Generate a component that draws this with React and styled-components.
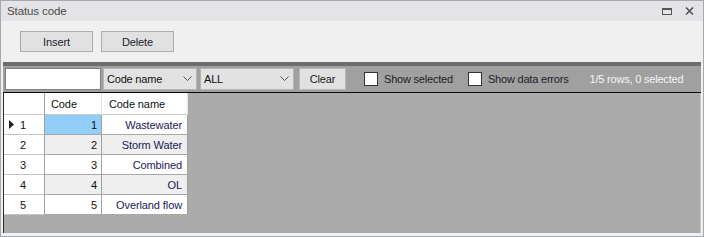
import React from "react";
import styled, { createGlobalStyle } from "styled-components";

const Global = createGlobalStyle`
  html, body { margin: 0; padding: 0; background: #ffffff; }
  * { box-sizing: border-box; }
  body { font-family: "Liberation Sans", Arial, sans-serif; font-size: 11px; letter-spacing: -0.1px; }
`;

const Window = styled.div`
  width: 704px;
  height: 237px;
  border: 1px solid #a6a9b2;
  background: #f0f0f0;
  display: flex;
  flex-direction: column;
  overflow: hidden;
`;

const TitleBar = styled.div`
  height: 20px;
  flex: none;
  background: #e4e4e6;
  display: flex;
  align-items: center;
  justify-content: space-between;
  padding: 0 9px 0 6px;
`;

const Title = styled.span`
  color: #4a4a4a;
  font-size: 11.5px;
`;

const TitleIcons = styled.div`
  display: flex;
  align-items: center;
  gap: 13px;
`;

const ActionBar = styled.div`
  height: 41px;
  flex: none;
  display: flex;
  align-items: flex-start;
  gap: 8px;
  padding: 10px 0 0 19px;
`;

const ActionButton = styled.button`
  width: 73px;
  height: 21px;
  background: #e1e1e1;
  border: 1px solid #adadad;
  border-radius: 0;
  font: inherit;
  letter-spacing: inherit;
  color: #1c1c2e;
  padding: 0;
`;

const Panel = styled.div`
  flex: 1;
  margin: 0 2px 3px 2px;
  display: flex;
  flex-direction: column;
  border-top: 4px solid #6d6d6d;
  min-height: 0;
`;

const FilterBar = styled.div`
  height: 27px;
  flex: none;
  background: #a0a0a0;
  border-bottom: 1px solid #0a0a0a;
  display: flex;
  align-items: center;
  padding: 0 0 1px 2px;
  letter-spacing: -0.2px;
`;

const SearchInput = styled.div`
  width: 96px;
  height: 22px;
  background: #ffffff;
  border: 1px solid #7f7f7f;
`;

const Select = styled.div`
  width: 94px;
  height: 22px;
  margin-left: ${(p) => p.$gap}px;
  background: #e2e2e2;
  border: 1px solid #b4b4b4;
  display: flex;
  align-items: center;
  justify-content: space-between;
  padding: 0 4px 0 3px;
  color: #111;
`;

const ClearButton = styled.div`
  width: 47px;
  height: 22px;
  margin-left: 5px;
  background: #e1e1e1;
  border: 1px solid #b8b8b8;
  display: flex;
  align-items: center;
  justify-content: center;
  color: #222;
`;

const CheckLabel = styled.label`
  display: flex;
  align-items: center;
  margin-left: ${(p) => p.$gap}px;
  color: #1e1e2a;
`;

const CheckBox = styled.span`
  width: 14px;
  height: 14px;
  background: #ffffff;
  border: 1px solid #333;
  margin-right: 6px;
`;

const Status = styled.span`
  margin-left: 21px;
  color: #f4f4f4;
`;

const GridArea = styled.div`
  flex: 1;
  background: #ababab;
  border-left: 1px solid #2a2a2a;
  border-right: 1px solid #c8c8c8;
  min-height: 0;
`;

const Grid = styled.div`
  display: grid;
  grid-template-columns: 41px 57px 86px;
  width: 184px;
`;

const HeadCell = styled.div`
  height: 22px;
  background: #ffffff;
  border-right: 1px solid ${(p) => (p.$first ? "#a0a0a0" : "#e6e6e6")};
  border-bottom: 1px solid #c9c9c9;
  display: flex;
  align-items: center;
  padding-left: ${(p) => p.$pad}px;
  color: #111;
`;

const RowHead = styled.div`
  height: 20px;
  background: #ffffff;
  border-right: 1px solid #a0a0a0;
  border-bottom: 1px solid #c4c4c4;
  display: flex;
  align-items: center;
  padding-left: 5px;
  color: #111;
`;

const Indicator = styled.span`
  width: 11px;
  display: flex;
  align-items: center;
`;

const Cell = styled.div`
  height: 20px;
  background: ${(p) => (p.$selected ? "#93cef8" : p.$alt ? "#efefef" : "#ffffff")};
  border-right: 1px solid #a0a0a0;
  border-bottom: 1px solid #a8a8a8;
  display: flex;
  align-items: center;
  justify-content: flex-end;
  padding-right: ${(p) => p.$pad}px;
  color: ${(p) => (p.$name ? "#202058" : "#111")};
`;

const Chevron = () => (
  <svg width="9" height="5" viewBox="0 0 9 5">
    <path d="M0.5 0.5 L4.5 4.5 L8.5 0.5" fill="none" stroke="#555" strokeWidth="1" />
  </svg>
);

const MaxIcon = () => (
  <svg width="10" height="7" viewBox="0 0 10 7">
    <rect x="0.5" y="0.5" width="9" height="6" fill="none" stroke="#555" strokeWidth="1" />
    <rect x="0" y="0" width="10" height="2" fill="#555" />
  </svg>
);

const CloseIcon = () => (
  <svg width="9" height="8" viewBox="0 0 9 8">
    <path d="M1 0.5 L8 7.5 M8 0.5 L1 7.5" stroke="#555" strokeWidth="1.6" />
  </svg>
);

const Arrow = () => (
  <svg width="5" height="9" viewBox="0 0 5 9">
    <path d="M0 0 L5 4.5 L0 9 Z" fill="#222" />
  </svg>
);

const rows = [
  { code: 1, name: "Wastewater" },
  { code: 2, name: "Storm Water" },
  { code: 3, name: "Combined" },
  { code: 4, name: "OL" },
  { code: 5, name: "Overland flow" },
];

export default function App() {
  return (
    <>
      <Global />
      <Window>
        <TitleBar>
          <Title>Status code</Title>
          <TitleIcons>
            <MaxIcon />
            <CloseIcon />
          </TitleIcons>
        </TitleBar>
        <ActionBar>
          <ActionButton>Insert</ActionButton>
          <ActionButton>Delete</ActionButton>
        </ActionBar>
        <Panel>
          <FilterBar>
            <SearchInput />
            <Select $gap={2}>
              <span>Code name</span>
              <Chevron />
            </Select>
            <Select $gap={3}>
              <span>ALL</span>
              <Chevron />
            </Select>
            <ClearButton>Clear</ClearButton>
            <CheckLabel $gap={18}>
              <CheckBox />
              Show selected
            </CheckLabel>
            <CheckLabel $gap={15}>
              <CheckBox />
              Show data errors
            </CheckLabel>
            <Status>1/5 rows, 0 selected</Status>
          </FilterBar>
          <GridArea>
            <Grid>
              <HeadCell $first $pad={0} />
              <HeadCell $pad={6}>Code</HeadCell>
              <HeadCell $pad={7}>Code name</HeadCell>
              {rows.map((r, i) => (
                <React.Fragment key={r.code}>
                  <RowHead>
                    <Indicator>{i === 0 ? <Arrow /> : null}</Indicator>
                    {r.code}
                  </RowHead>
                  <Cell $pad={4} $alt={i % 2 === 1} $selected={i === 0}>
                    {r.code}
                  </Cell>
                  <Cell $pad={5} $alt={i % 2 === 1} $name>
                    {r.name}
                  </Cell>
                </React.Fragment>
              ))}
            </Grid>
          </GridArea>
        </Panel>
      </Window>
    </>
  );
}
